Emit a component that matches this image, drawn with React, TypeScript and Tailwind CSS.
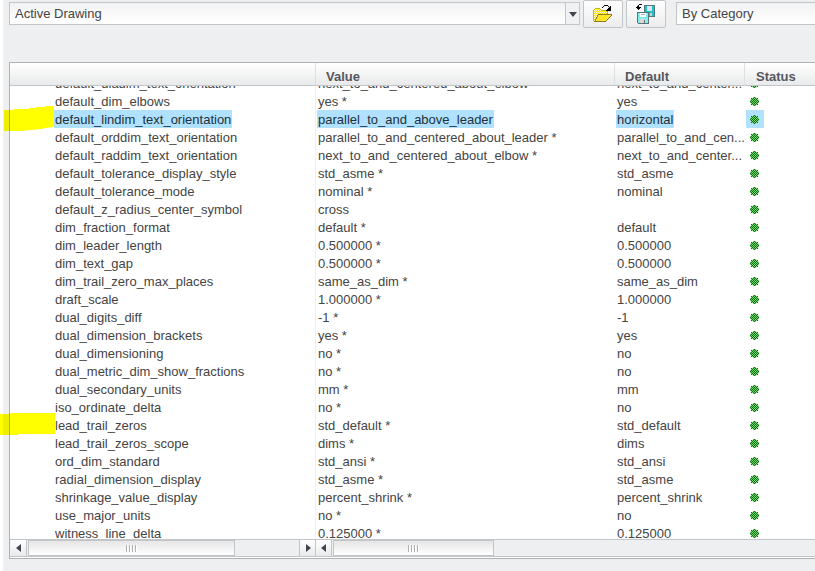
import { useCallback } from 'react';
import clsx from 'clsx';

type Option = {
  name: string;
  value: string;
  def: string;
  selected?: boolean;
};

const options: Option[] = [
  { name: 'default_diadim_text_orientation', value: 'next_to_and_centered_about_elbow', def: 'next_to_and_center...' },
  { name: 'default_dim_elbows', value: 'yes *', def: 'yes' },
  { name: 'default_lindim_text_orientation', value: 'parallel_to_and_above_leader', def: 'horizontal', selected: true },
  { name: 'default_orddim_text_orientation', value: 'parallel_to_and_centered_about_leader *', def: 'parallel_to_and_cen...' },
  { name: 'default_raddim_text_orientation', value: 'next_to_and_centered_about_elbow *', def: 'next_to_and_center...' },
  { name: 'default_tolerance_display_style', value: 'std_asme *', def: 'std_asme' },
  { name: 'default_tolerance_mode', value: 'nominal *', def: 'nominal' },
  { name: 'default_z_radius_center_symbol', value: 'cross', def: '' },
  { name: 'dim_fraction_format', value: 'default *', def: 'default' },
  { name: 'dim_leader_length', value: '0.500000 *', def: '0.500000' },
  { name: 'dim_text_gap', value: '0.500000 *', def: '0.500000' },
  { name: 'dim_trail_zero_max_places', value: 'same_as_dim *', def: 'same_as_dim' },
  { name: 'draft_scale', value: '1.000000 *', def: '1.000000' },
  { name: 'dual_digits_diff', value: '-1 *', def: '-1' },
  { name: 'dual_dimension_brackets', value: 'yes *', def: 'yes' },
  { name: 'dual_dimensioning', value: 'no *', def: 'no' },
  { name: 'dual_metric_dim_show_fractions', value: 'no *', def: 'no' },
  { name: 'dual_secondary_units', value: 'mm *', def: 'mm' },
  { name: 'iso_ordinate_delta', value: 'no *', def: 'no' },
  { name: 'lead_trail_zeros', value: 'std_default *', def: 'std_default' },
  { name: 'lead_trail_zeros_scope', value: 'dims *', def: 'dims' },
  { name: 'ord_dim_standard', value: 'std_ansi *', def: 'std_ansi' },
  { name: 'radial_dimension_display', value: 'std_asme *', def: 'std_asme' },
  { name: 'shrinkage_value_display', value: 'percent_shrink *', def: 'percent_shrink' },
  { name: 'use_major_units', value: 'no *', def: 'no' },
  { name: 'witness_line_delta', value: '0.125000 *', def: '0.125000' },
];

function StatusDot() {
  return (
    <svg className="block h-[9px] w-[9px]" viewBox="0 0 9 9" shapeRendering="crispEdges" role="img" aria-label="Applied">
      <defs>
        <pattern id="dither" width="2" height="2" patternUnits="userSpaceOnUse">
          <rect width="2" height="2" fill="#7fd07f" />
          <rect width="1" height="1" fill="#007800" />
          <rect x="1" y="1" width="1" height="1" fill="#007800" />
        </pattern>
      </defs>
      <path d="M3 0h3v1h2v2h1v3h-1v2h-2v1h-3v-1h-2v-2h-1v-3h1v-2h2z" fill="url(#dither)" />
    </svg>
  );
}

function OpenIcon() {
  return (
    <svg className="h-5 w-5" viewBox="0 0 20 20" shapeRendering="crispEdges" aria-hidden="true">
      <defs>
        <pattern id="paper" width="2" height="2" patternUnits="userSpaceOnUse">
          <rect width="2" height="2" fill="#fffbd0" />
          <rect width="1" height="1" fill="#ffe600" />
          <rect x="1" y="1" width="1" height="1" fill="#ffe600" />
        </pattern>
      </defs>
      <path d="M1 6h1V5h5v1h1v1h6v4H5v2H4v2H3v2H1z" fill="url(#paper)" />
      <path d="M0 6h1v11H0zM1 5h1v1H1zM2 4h5v1H2zM7 5h1v1H7zM8 6h6v1H8zM14 7h1v3h-1z" fill="#c6b21c" />
      <path d="M5 11h13v1h-1v1h-1v1h-1v1h-1v1h-1v1H2v-1h1v-2h1v-2h1z" fill="#ffe629" />
      <path d="M5 10h14v1H5zM18 11h1v1h-1zM17 12h1v1h-1zM16 13h1v1h-1zM15 14h1v1h-1zM14 15h1v1h-1zM13 16h1v1h-1zM1 17h12v1H1zM4 11h1v2H4zM3 13h1v2H3zM2 15h1v2H2z" fill="#8c7d2b" />
      <path d="M9 3h1v1H9zM10 2h1v1h-1zM11 1h4v1h-4zM15 2h1v1h-1zM16 3h1v1h-1zM17 2h1v5h-5V6h1V5h1V4h2z" fill="#000" />
    </svg>
  );
}

function SaveIcon() {
  return (
    <svg className="h-5 w-5" viewBox="0 0 20 20" shapeRendering="crispEdges" aria-hidden="true">
      <path d="M8 1h11v12H8z" fill="#55777b" />
      <path d="M9 2h9v10H9z" fill="#16c6cb" />
      <path d="M11 2h5v5h-5z" fill="#e6e6e6" />
      <path d="M14 9h2v3h-2z" fill="#d0d0d0" />
      <path d="M1 8h12v12H2v-1H1z" fill="#5c7275" />
      <path d="M2 9h10v10H2z" fill="#7fecef" />
      <path d="M4 9h6v4H4z" fill="#fff" />
      <path d="M5 10h4v1H5z" fill="#a8b4b5" />
      <path d="M4 15h6v4H4z" fill="#d9d9d9" />
      <path d="M8 16h1v3H8z" fill="#666" />
      <path d="M3 0h3v1H3zM2 1h1v2h2v1H4v1H3v1H2V5H1V4H0V3h1V2h1z" fill="#000" />
    </svg>
  );
}

function Arrow({ dir }: { dir: 'left' | 'right' | 'down' }) {
  const shapes = {
    left: 'M6 0v8L1 4z',
    right: 'M2 0v8l5-4z',
    down: 'M0 2h8L4 7z',
  };
  return (
    <svg className="h-2 w-2" viewBox="0 0 8 8" aria-hidden="true">
      <path d={shapes[dir]} fill="#43444f" />
    </svg>
  );
}

function ScrollButton({ dir, label }: { dir: 'left' | 'right'; label: string }) {
  return (
    <button
      aria-label={label}
      className={clsx(
        'flex w-4 shrink-0 items-center justify-center border-[#c3c6c9] bg-linear-to-b from-white to-[#e9eaeb]',
        dir === 'left' ? 'border-r' : 'border-l'
      )}
    >
      <Arrow dir={dir} />
    </button>
  );
}

function Thumb({ className }: { className: string }) {
  return (
    <div className={clsx('flex items-center justify-center gap-px border border-[#c3c6c9] bg-linear-to-b from-[#e6e6e6] to-white', className)}>
      <i className="h-[7px] w-[2px] border-r border-white bg-[#b0b2b5]" />
      <i className="h-[7px] w-[2px] border-r border-white bg-[#b0b2b5]" />
      <i className="h-[7px] w-[2px] border-r border-white bg-[#b0b2b5]" />
      <i className="h-[7px] w-[2px] border-r border-white bg-[#b0b2b5]" />
    </div>
  );
}

function Cell({ text, selected }: { text: string; selected?: boolean }) {
  return (
    <span className={clsx('inline-block h-[18px] px-px align-top leading-5', selected && 'bg-[#b0e2ff] text-[#22303a]')}>
      {text}
    </span>
  );
}

export default function App() {
  // the list opens scrolled part of a row down
  const scrollRef = useCallback((el: HTMLDivElement | null) => {
    if (el) el.scrollTop = 12;
  }, []);

  return (
    <div className="relative bg-white pl-[3px] font-['Liberation_Sans',Arial,sans-serif] text-[13px] text-[#444]">
      <div className="min-h-screen overflow-hidden bg-[#eeeff1] pl-[6px]">
        {/* Toolbar */}
        <div className="flex h-[62px] items-start">
          <div className="relative mt-[2px] h-[23px] min-w-0 flex-1">
            <select
              aria-label="Drawing"
              className="h-full w-full appearance-none border border-[#c3c6c9] bg-linear-to-b from-[#f2f2f3] to-white pl-[5px]"
            >
              <option>Active Drawing</option>
            </select>
            <span className="pointer-events-none absolute inset-y-px right-px flex w-[14px] items-center justify-center border-l border-[#c3c6c9] bg-[#f0f1f2]">
              <Arrow dir="down" />
            </span>
          </div>
          <button aria-label="Open" className="ml-[3px] flex h-7 w-10 shrink-0 items-center justify-center rounded-xs border border-[#c3c6c9] bg-linear-to-b from-white to-[#ececed]">
            <OpenIcon />
          </button>
          <button aria-label="Save" className="ml-[3px] flex h-7 w-10 shrink-0 items-center justify-center rounded-xs border border-[#c3c6c9] bg-linear-to-b from-white to-[#ececed]">
            <SaveIcon />
          </button>
          <select
            aria-label="Sort"
            className="mt-[2px] ml-[10px] h-[23px] w-[139px] shrink-0 appearance-none border border-r-0 border-[#c3c6c9] bg-linear-to-b from-[#f2f2f3] to-white pl-[5px]"
          >
            <option>By Category</option>
          </select>
        </div>

        {/* Options list */}
        <div className="border-y border-l border-[#b0b2b5] bg-white">
          <div ref={scrollRef} className="h-[476px] overflow-hidden">
            <table className="w-full table-fixed border-separate border-spacing-0 text-left">
              <colgroup>
                <col className="w-[306px]" />
                <col className="w-[299px]" />
                <col className="w-[130px]" />
                <col />
              </colgroup>
              <thead className="leading-4 text-[#55585c]">
                <tr className="h-[23px]">
                  <th aria-label="Option" className="sticky top-0 border-r border-b border-[#c3c6c9] border-r-[#dddfe1] bg-linear-to-b from-white to-[#e9eaeb] p-0" />
                  <th className="sticky top-0 border-r border-b border-[#c3c6c9] border-r-[#dddfe1] bg-linear-to-b from-white to-[#e9eaeb] p-0 pt-1.5 pl-[10px]">Value</th>
                  <th className="sticky top-0 border-r border-b border-[#c3c6c9] border-r-[#dddfe1] bg-linear-to-b from-white to-[#e9eaeb] p-0 pt-1.5 pl-[10px]">Default</th>
                  <th className="sticky top-0 border-b border-[#c3c6c9] bg-linear-to-b from-white to-[#e9eaeb] p-0 pt-1.5 pl-[11px]">Status</th>
                </tr>
              </thead>
              <tbody className="leading-[18px] whitespace-nowrap">
                {options.map((o) => (
                  <tr key={o.name} className="h-[18px]">
                    <td className="h-[18px] border-r border-[#eeeff1] p-0 pl-11 align-top"><Cell text={o.name} selected={o.selected} /></td>
                    <td className="p-0 pl-px align-top"><Cell text={o.value} selected={o.selected} /></td>
                    <td className="p-0 pl-px align-top"><Cell text={o.def} selected={o.selected} /></td>
                    <td className="p-0 pl-px align-top">
                      <span className={clsx('flex h-[18px] w-[18px] pt-[5px] pl-1', o.selected && 'bg-[#b0e2ff]')}>
                        <StatusDot />
                      </span>
                    </td>
                  </tr>
                ))}
              </tbody>
            </table>
          </div>

          {/* Scrollbars */}
          <div className="flex h-[18px] border-y border-[#c3c6c9] bg-[#eeeff1]">
            <div className="flex w-[306px] shrink-0 border-r border-[#c3c6c9] pl-px">
              <ScrollButton dir="left" label="Scroll names left" />
              <Thumb className="ml-px flex-1" />
              <div className="w-16" />
              <ScrollButton dir="right" label="Scroll names right" />
            </div>
            <div className="flex flex-1">
              <ScrollButton dir="left" label="Scroll values left" />
              <Thumb className="ml-px w-[161px]" />
            </div>
          </div>
          <div className="h-px" />
        </div>
      </div>

      {/* Highlighter strokes over the list */}
      <svg className="pointer-events-none absolute top-[106px] left-1 h-[25px] w-[50px] mix-blend-multiply" viewBox="0 0 50 25" aria-hidden="true">
        <path d="M0 4h9V3h16V2h7V1h9V0h9v21l-9 1-3 1-12 1-8 1H0z" fill="#ff0" />
      </svg>
      <svg className="pointer-events-none absolute top-[413px] left-0 h-[22px] w-[55px] mix-blend-multiply" viewBox="0 0 55 22" aria-hidden="true">
        <path d="M0 1h9V0h46v21H18v1H0z" fill="#ff0" />
      </svg>
    </div>
  );
}
